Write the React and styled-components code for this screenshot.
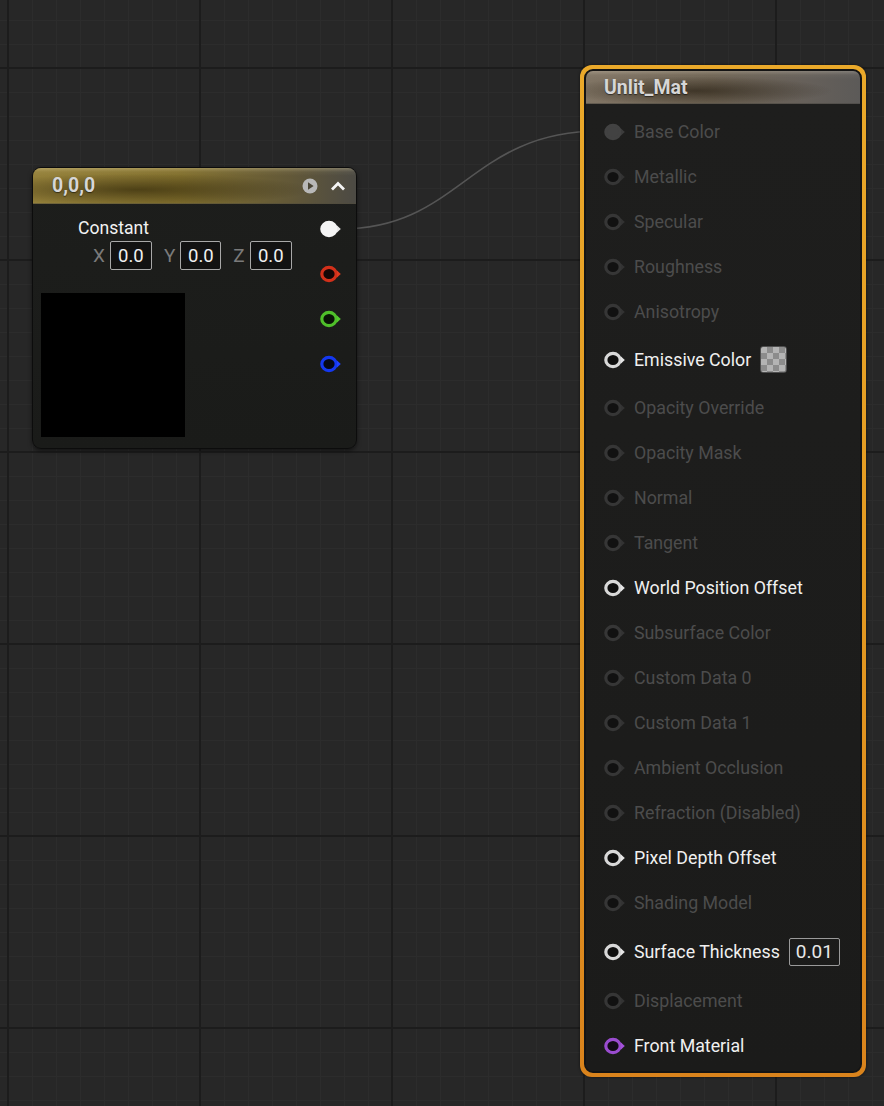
import React from "react";
import styled, { createGlobalStyle } from "styled-components";

const GlobalStyle = createGlobalStyle`
  html, body {
    margin: 0;
    padding: 0;
    background: #262626;
  }
  * {
    box-sizing: border-box;
  }
`;

const Canvas = styled.div`
  position: relative;
  width: 884px;
  height: 1106px;
  overflow: hidden;
  font-family: Roboto, "Noto Sans", sans-serif;
  background-color: #272727;
  background-image:
    linear-gradient(to right, #1c1c1c 2px, transparent 2px),
    linear-gradient(to bottom, #1c1c1c 2px, transparent 2px),
    linear-gradient(to right, #2c2c2c 1px, transparent 1px),
    linear-gradient(to bottom, #2c2c2c 1px, transparent 1px);
  background-size: 192px 192px, 192px 192px, 24px 24px, 24px 24px;
  background-position: 7px 67px, 7px 67px, 8px 68px, 8px 68px;
`;

const Wires = styled.svg`
  position: absolute;
  left: 0;
  top: 0;
`;

/* ---------- constant node ---------- */

const ConstNode = styled.div`
  position: absolute;
  left: 32px;
  top: 167px;
  width: 325px;
  height: 282px;
  border-radius: 9px;
  border: 1px solid #0c0c0c;
  background: linear-gradient(180deg, #1d1e1c 0%, #1a1b19 100%);
  box-shadow: 0 2px 4px rgba(0, 0, 0, 0.5);
  overflow: hidden;
  display: flex;
  flex-direction: column;
`;

const NodeHeader = styled.div`
  height: ${(p) => p.$h}px;
  display: flex;
  align-items: center;
  padding: 0 10px 0 ${(p) => p.$pad}px;
  color: #d6d6d6;
  font-weight: 700;
  font-size: 19.5px;
  background: ${(p) => p.$bg};
  border-bottom: 1px solid rgba(0, 0, 0, 0.35);
`;

const HeaderTitle = styled.span`
  flex: 1;
  text-shadow: 0 1px 1px rgba(0, 0, 0, 0.5);
`;

const HeaderIcons = styled.div`
  display: flex;
  align-items: center;
  gap: 12px;
`;

const ConstBody = styled.div`
  flex: 1;
  display: flex;
  padding: 0 14px 0 8px;
`;

const ConstLeft = styled.div`
  flex: 1;
  display: flex;
  flex-direction: column;
  padding-top: 12px;
`;

const ConstLabel = styled.div`
  color: #f2f2f2;
  font-size: 17.6px;
  line-height: 24px;
  margin-left: 37px;
`;

const VecRow = styled.div`
  display: flex;
  align-items: center;
  gap: 5px;
  margin: 1px 0 0 52px;
`;

const AxisLabel = styled.span`
  color: #7a7a7a;
  font-size: 19px;
  margin-left: ${(p) => (p.$first ? 0 : 7)}px;
`;

const ValueBox = styled.div`
  height: 29px;
  width: ${(p) => p.$w}px;
  border: 1.5px solid #a8a8a8;
  border-radius: 2px;
  background: #121212;
  color: #f0f0f0;
  font-size: 18.5px;
  display: flex;
  align-items: center;
  justify-content: center;
`;

const Preview = styled.div`
  width: 144px;
  height: 144px;
  background: #000;
  margin-top: 23px;
`;

const PinColumn = styled.div`
  display: flex;
  flex-direction: column;
  padding-top: 2px;
`;

const PinSlot = styled.div`
  height: 45px;
  display: flex;
  align-items: center;
`;

/* ---------- material node ---------- */

const Selection = styled.div`
  position: absolute;
  left: 580px;
  top: 65px;
  width: 286px;
  height: 1012px;
  border-radius: 12px;
  padding: 4px;
  background: linear-gradient(180deg, #eaa92a 0%, #e39a22 50%, #d9831c 100%);
  box-shadow: 0 0 3px rgba(0, 0, 0, 0.6);
`;

const MatNode = styled.div`
  height: 100%;
  border-radius: 9px;
  border: 2px solid #141414;
  background: #1c1c1b;
  overflow: hidden;
  display: flex;
  flex-direction: column;
`;

const MatBody = styled.div`
  flex: 1;
  display: flex;
  flex-direction: column;
  padding-top: 5px;
  background: linear-gradient(180deg, #1e1e1d 0%, #1b1b1a 100%);
`;

const InputRow = styled.div`
  height: ${(p) => p.$h || 45}px;
  flex-shrink: 0;
  display: flex;
  align-items: center;
  padding-left: 18px;
  gap: 8px;
`;

const InputLabel = styled.span`
  font-size: 17.8px;
  color: ${(p) => (p.$active ? "#f0f0f0" : "#4c4c4c")};
  white-space: nowrap;
`;

const Swatch = styled.div`
  width: 27px;
  height: 27px;
  margin-left: 1px;
  border-radius: 3px;
  border: 1.5px solid #4e4e4e;
  background: conic-gradient(#8c8c8c 25%, #b4b4b4 0 50%, #8c8c8c 0 75%, #b4b4b4 0) 0 0 / 12px 12px;
`;

const InlineValue = styled.div`
  height: 28px;
  padding: 0 6px;
  margin-left: 1px;
  border: 1.5px solid #9a9a9a;
  border-radius: 2px;
  color: #e8e8e8;
  font-size: 19px;
  display: flex;
  align-items: center;
`;

const PinSvg = styled.svg`
  flex-shrink: 0;
  display: block;
`;

const Pin = ({ ring, fill, arrow }) => (
  <PinSvg width="22" height="18" viewBox="0 0 22 18">
    <ellipse cx="9" cy="9" rx="7.2" ry="6.6" fill={fill} stroke={ring} strokeWidth="3.2" />
    <path d="M17 5.6 L20.8 9 L17 12.4 Z" fill={arrow} />
  </PinSvg>
);

const pinStyles = {
  off: { ring: "#363636", fill: "#111", arrow: "#333" },
  on: { ring: "#d8d8d8", fill: "#0e0e0e", arrow: "#e6e6e6" },
  linked: { ring: "#424242", fill: "#424242", arrow: "#3c3c3c" },
  purple: { ring: "#9a4ccf", fill: "#120c16", arrow: "#a552dc" },
  white: { ring: "#f4f4f4", fill: "#f4f4f4", arrow: "#e8e8e8" },
  red: { ring: "#d2301a", fill: "#150606", arrow: "#e03a20" },
  green: { ring: "#4fbf2a", fill: "#0a1407", arrow: "#55c830" },
  blue: { ring: "#1438f0", fill: "#050818", arrow: "#2042ff" },
};

const inputs = [
  { name: "Base Color", pin: "linked" },
  { name: "Metallic" },
  { name: "Specular" },
  { name: "Roughness" },
  { name: "Anisotropy" },
  { name: "Emissive Color", active: true, swatch: true, h: 51 },
  { name: "Opacity Override" },
  { name: "Opacity Mask" },
  { name: "Normal" },
  { name: "Tangent" },
  { name: "World Position Offset", active: true },
  { name: "Subsurface Color" },
  { name: "Custom Data 0" },
  { name: "Custom Data 1" },
  { name: "Ambient Occlusion" },
  { name: "Refraction (Disabled)" },
  { name: "Pixel Depth Offset", active: true },
  { name: "Shading Model" },
  { name: "Surface Thickness", active: true, value: "0.01", h: 53 },
  { name: "Displacement" },
  { name: "Front Material", active: true, pin: "purple" },
];

const constHeaderBg = `
  linear-gradient(180deg, rgba(255,240,190,0.28) 0px, rgba(255,240,190,0.05) 4px, transparent 8px),
  radial-gradient(ellipse 55% 45% at 32% 62%, rgba(30,22,0,0.55), transparent 100%),
  linear-gradient(90deg, #94803a 0%, #82702e 45%, #625838 80%, #4c4a44 100%)
`;

const matHeaderBg = `
  linear-gradient(180deg, rgba(255,245,225,0.22) 0px, rgba(255,245,225,0.04) 4px, transparent 8px),
  radial-gradient(ellipse 50% 45% at 40% 62%, rgba(30,22,10,0.6), transparent 100%),
  linear-gradient(90deg, #817565 0%, #6f6454 45%, #66605a 80%, #5c5a58 100%)
`;

export default function App() {
  return (
    <>
      <GlobalStyle />
      <Canvas>
        <Wires width="884" height="1106">
          <path
            d="M341 229 C 460 229, 470 131, 600 131"
            fill="none"
            stroke="#555"
            strokeWidth="1.6"
          />
        </Wires>

        <ConstNode>
          <NodeHeader $h={36} $pad={19} $bg={constHeaderBg}>
            <HeaderTitle>0,0,0</HeaderTitle>
            <HeaderIcons>
              <svg width="16" height="16" viewBox="0 0 16 16">
                <circle cx="8" cy="8" r="7.5" fill="#b8b8b8" />
                <path d="M6 4.3 L11.6 8 L6 11.7 Z" fill="#4a4536" />
              </svg>
              <svg width="16" height="12" viewBox="0 0 16 12">
                <path d="M2 9.5 L8 3.5 L14 9.5" fill="none" stroke="#f4f4f4" strokeWidth="2.8" />
              </svg>
            </HeaderIcons>
          </NodeHeader>
          <ConstBody>
            <ConstLeft>
              <ConstLabel>Constant</ConstLabel>
              <VecRow>
                <AxisLabel $first>X</AxisLabel>
                <ValueBox $w={42}>0.0</ValueBox>
                <AxisLabel>Y</AxisLabel>
                <ValueBox $w={41}>0.0</ValueBox>
                <AxisLabel>Z</AxisLabel>
                <ValueBox $w={42}>0.0</ValueBox>
              </VecRow>
              <Preview />
            </ConstLeft>
            <PinColumn>
              {["white", "red", "green", "blue"].map((c) => (
                <PinSlot key={c}>
                  <Pin {...pinStyles[c]} />
                </PinSlot>
              ))}
            </PinColumn>
          </ConstBody>
        </ConstNode>

        <Selection>
          <MatNode>
            <NodeHeader $h={33} $pad={18} $bg={matHeaderBg}>
              <HeaderTitle>Unlit_Mat</HeaderTitle>
            </NodeHeader>
            <MatBody>
              {inputs.map((inp) => (
                <InputRow key={inp.name} $h={inp.h}>
                  <Pin {...pinStyles[inp.pin || (inp.active ? "on" : "off")]} />
                  <InputLabel $active={inp.active}>{inp.name}</InputLabel>
                  {inp.swatch && <Swatch />}
                  {inp.value && <InlineValue>{inp.value}</InlineValue>}
                </InputRow>
              ))}
            </MatBody>
          </MatNode>
        </Selection>
      </Canvas>
    </>
  );
}
